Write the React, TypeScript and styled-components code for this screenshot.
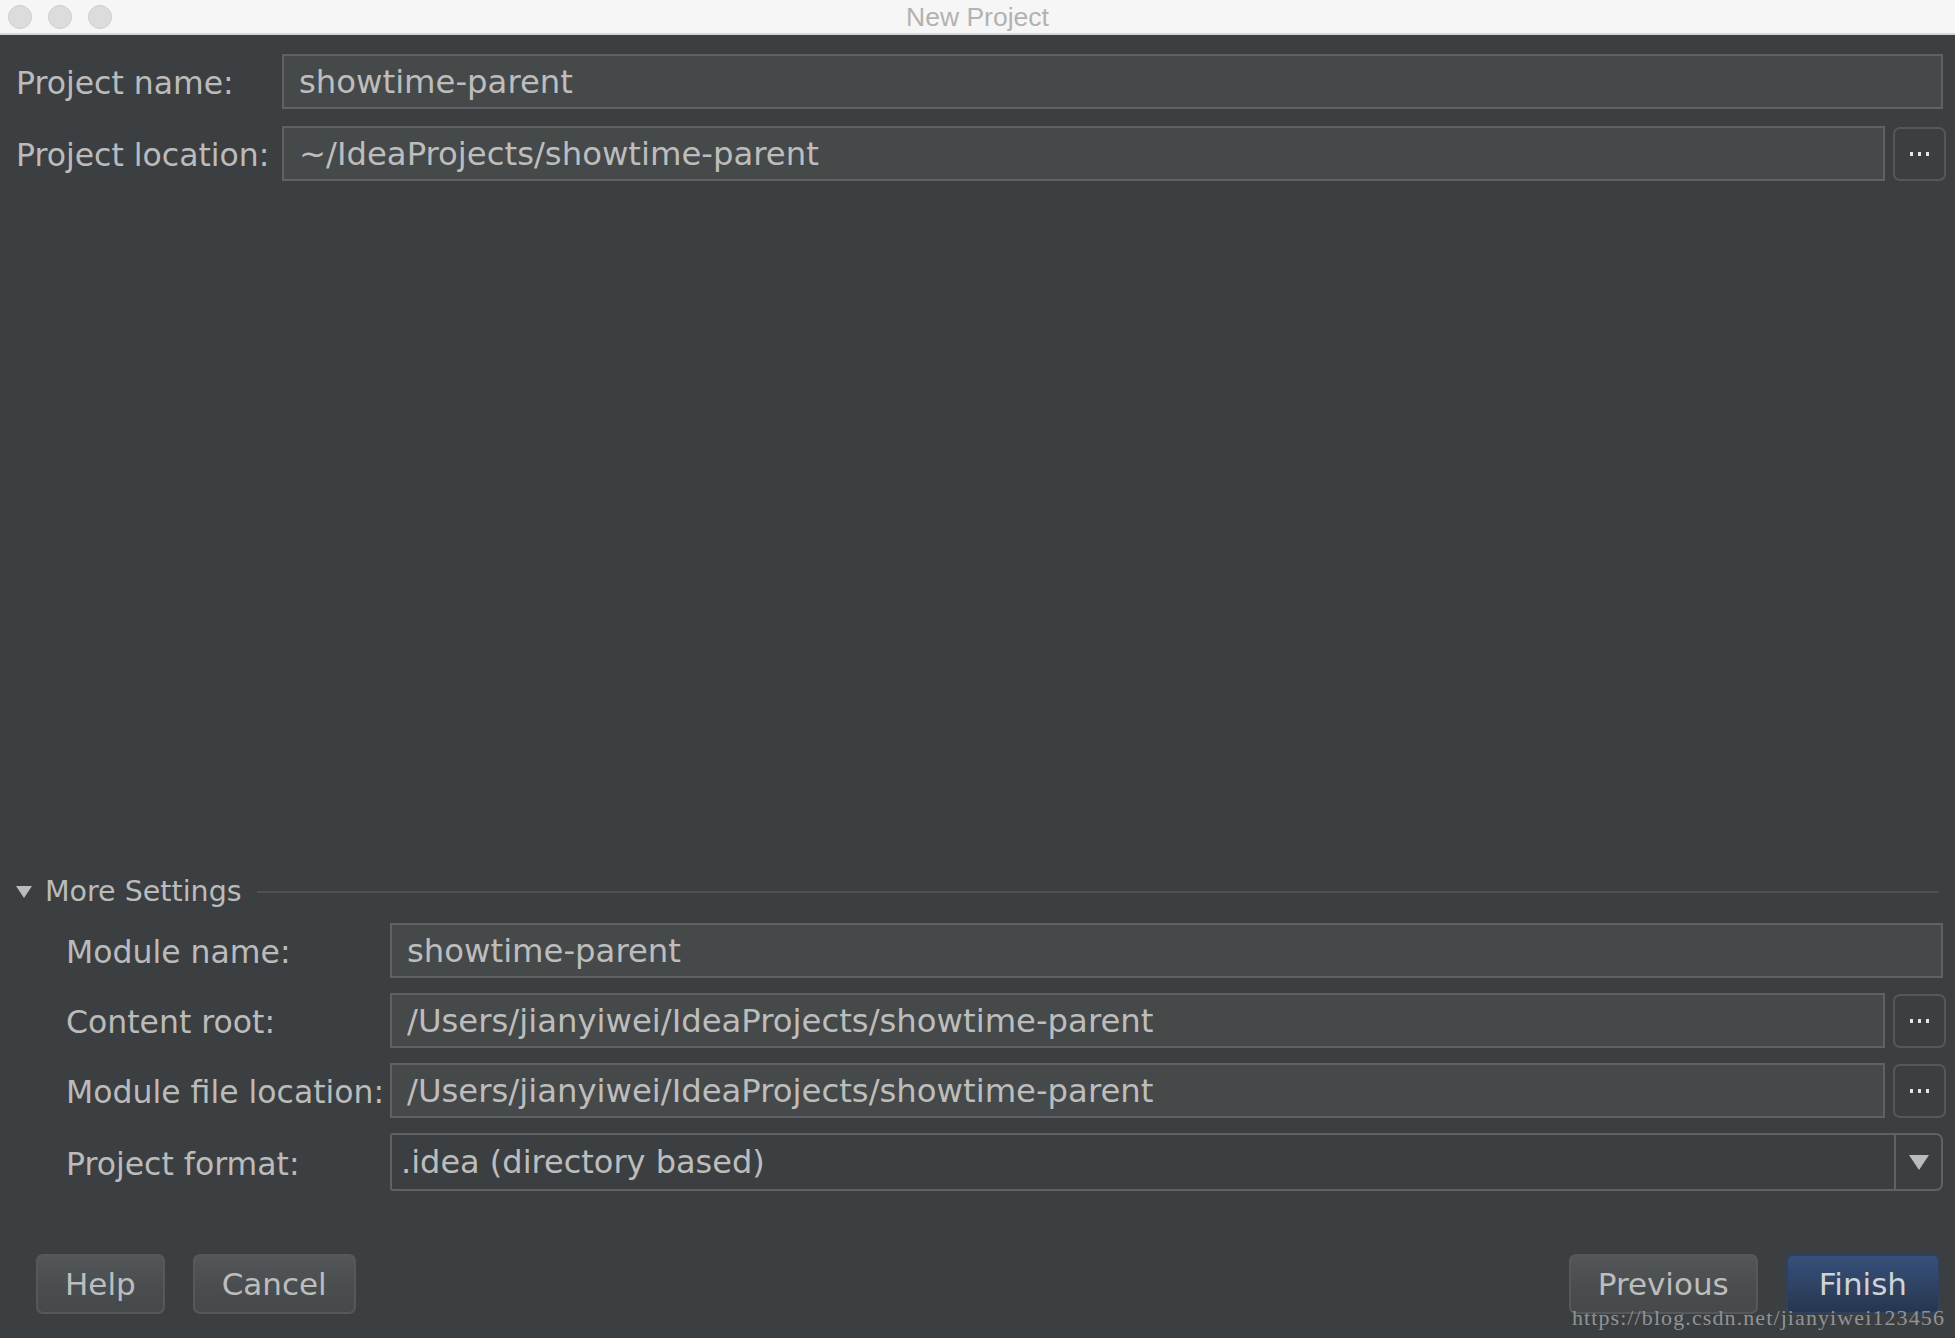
import styled, { createGlobalStyle } from 'styled-components'

const GlobalStyle = createGlobalStyle`
  html, body {
    margin: 0;
    padding: 0;
    background: #3c3f41;
  }
  * {
    box-sizing: border-box;
  }
`

const UI_FONT = `"DejaVu Sans", "Open Sans", sans-serif`

const Window = styled.div`
  position: relative;
  display: flex;
  flex-direction: column;
  height: 100vh;
  background: #3c3f41;
  font-family: ${UI_FONT};
  color: #bbbbbb;
  overflow: hidden;
`

const TitleBar = styled.div`
  display: grid;
  grid-template-columns: 1fr auto 1fr;
  align-items: center;
  height: 35px;
  padding: 0 8px 0 8px;
  background: #f6f6f6;
  border-bottom: 2px solid #d6d6d6;
`

const Lights = styled.div`
  display: flex;
  align-items: center;
  gap: 16px;
`

const Light = styled.span`
  width: 24px;
  height: 24px;
  border-radius: 50%;
  background: #dcdcdc;
  border: 1px solid #d0d0d0;
`

const Title = styled.div`
  font-family: "Liberation Sans", Arial, sans-serif;
  font-size: 26.5px;
  color: #b2b2b2;
  line-height: 1;
  padding-top: 1px;
`

const Content = styled.div`
  flex: 1;
  display: flex;
  flex-direction: column;
  padding: 19px 9px 24px 16px;
`

const TopFields = styled.div`
  display: flex;
  flex-direction: column;
  gap: 17px;
`

const FieldRow = styled.div<{ $labelWidth: number; $withButton?: boolean }>`
  display: grid;
  grid-template-columns: ${p => p.$labelWidth}px 1fr ${p => (p.$withButton ? '53px' : '')};
  column-gap: 8px;
  align-items: center;
  height: 55px;
`

const Label = styled.label`
  font-size: 31.5px;
  color: #bbbbbb;
  white-space: nowrap;
  padding-top: 3px;
  margin-right: -8px;
`

const TextField = styled.input<{ $flushRight?: boolean }>`
  height: 100%;
  width: auto;
  min-width: 0;
  margin-right: ${p => (p.$flushRight ? '3px' : '0')};
  padding: 0 15px;
  border: 2px solid #5f6264;
  background: #45494a;
  color: #bdbdbd;
  font-family: ${UI_FONT};
  font-size: 32.3px;
  outline: none;
`

const BrowseButton = styled.button`
  display: flex;
  align-items: center;
  justify-content: center;
  gap: 5px;
  height: 54px;
  padding: 0;
  border: 2px solid #55585a;
  border-radius: 7px;
  background: #3c3f41;
  cursor: pointer;
`

const Dot = styled.span`
  width: 3px;
  height: 4px;
  background: #e6e6e6;
`

const Spacer = styled.div`
  flex: 1;
`

const SectionHeader = styled.div`
  display: flex;
  align-items: center;
  height: 22px;
  margin-right: 7px;
`

const Caret = styled.span`
  width: 0;
  height: 0;
  border-left: 8px solid transparent;
  border-right: 8px solid transparent;
  border-top: 12px solid #bbbbbb;
  margin-right: 13px;
`

const SectionTitle = styled.span`
  font-size: 28.5px;
  color: #bbbbbb;
  white-space: nowrap;
  margin-top: -2px;
`

const SectionRule = styled.span`
  flex: 1;
  height: 2px;
  margin-left: 15px;
  background: #4d5153;
`

const SubFields = styled.div`
  display: flex;
  flex-direction: column;
  gap: 15px;
  margin-top: 20px;
  padding-left: 50px;
`

const ComboRow = styled(FieldRow)`
  height: 58px;
`

const ComboBox = styled.div`
  display: grid;
  grid-template-columns: 1fr 47px;
  height: 100%;
  margin-right: 3px;
  border: 2px solid #5f6264;
  border-radius: 3px 7px 7px 3px;
  background: #3c3f41;
`

const ComboValue = styled.div`
  display: flex;
  align-items: center;
  padding-left: 9px;
  font-size: 32px;
  color: #bdbdbd;
`

const ComboArrow = styled.div`
  display: flex;
  align-items: center;
  justify-content: center;
  border-left: 2px solid #5f6264;

  &::after {
    content: '';
    width: 0;
    height: 0;
    border-left: 10px solid transparent;
    border-right: 10px solid transparent;
    border-top: 15px solid #bbbbbb;
  }
`

const Footer = styled.div`
  display: flex;
  justify-content: space-between;
  align-items: center;
  margin-top: 63px;
  padding: 0 6px 0 20px;
`

const ButtonGroup = styled.div`
  display: flex;
  gap: 28px;
`

const DialogButton = styled.button<{ $primary?: boolean }>`
  height: 60px;
  padding: 0 ${p => (p.$primary ? '31px' : '27px')};
  border-radius: 7px;
  border: 2px solid ${p => (p.$primary ? '#2e4260' : '#56595b')};
  background: ${p =>
    p.$primary
      ? 'linear-gradient(180deg, #36507a 0%, #2f4466 50%, #27364f 100%)'
      : 'linear-gradient(180deg, #535759 0%, #4a4e50 50%, #45494a 100%)'};
  color: ${p => (p.$primary ? '#d0d3d6' : '#bdbdbd')};
  font-family: ${UI_FONT};
  font-size: 31px;
  cursor: pointer;
`

const Watermark = styled.div`
  position: absolute;
  right: 10px;
  bottom: 7px;
  font-family: "Liberation Serif", "Times New Roman", serif;
  font-size: 22px;
  letter-spacing: 1.1px;
  color: #909396;
  pointer-events: none;
`

function Browse() {
  return (
    <BrowseButton aria-label="Browse">
      <Dot />
      <Dot />
      <Dot />
    </BrowseButton>
  )
}

export default function App() {
  return (
    <>
      <GlobalStyle />
      <Window>
        <TitleBar>
          <Lights>
            <Light />
            <Light />
            <Light />
          </Lights>
          <Title>New Project</Title>
          <span />
        </TitleBar>

        <Content>
          <TopFields>
            <FieldRow $labelWidth={258}>
              <Label>Project name:</Label>
              <TextField $flushRight readOnly value="showtime-parent" />
            </FieldRow>
            <FieldRow $labelWidth={258} $withButton>
              <Label>Project location:</Label>
              <TextField readOnly value="~/IdeaProjects/showtime-parent" />
              <Browse />
            </FieldRow>
          </TopFields>

          <Spacer />

          <SectionHeader>
            <Caret />
            <SectionTitle>More Settings</SectionTitle>
            <SectionRule />
          </SectionHeader>

          <SubFields>
            <FieldRow $labelWidth={316}>
              <Label>Module name:</Label>
              <TextField $flushRight readOnly value="showtime-parent" />
            </FieldRow>
            <FieldRow $labelWidth={316} $withButton>
              <Label>Content root:</Label>
              <TextField readOnly value="/Users/jianyiwei/IdeaProjects/showtime-parent" />
              <Browse />
            </FieldRow>
            <FieldRow $labelWidth={316} $withButton>
              <Label>Module file location:</Label>
              <TextField readOnly value="/Users/jianyiwei/IdeaProjects/showtime-parent" />
              <Browse />
            </FieldRow>
            <ComboRow $labelWidth={316}>
              <Label>Project format:</Label>
              <ComboBox>
                <ComboValue>.idea (directory based)</ComboValue>
                <ComboArrow />
              </ComboBox>
            </ComboRow>
          </SubFields>

          <Footer>
            <ButtonGroup>
              <DialogButton>Help</DialogButton>
              <DialogButton>Cancel</DialogButton>
            </ButtonGroup>
            <ButtonGroup>
              <DialogButton>Previous</DialogButton>
              <DialogButton $primary>Finish</DialogButton>
            </ButtonGroup>
          </Footer>
        </Content>

        <Watermark>https://blog.csdn.net/jianyiwei123456</Watermark>
      </Window>
    </>
  )
}
